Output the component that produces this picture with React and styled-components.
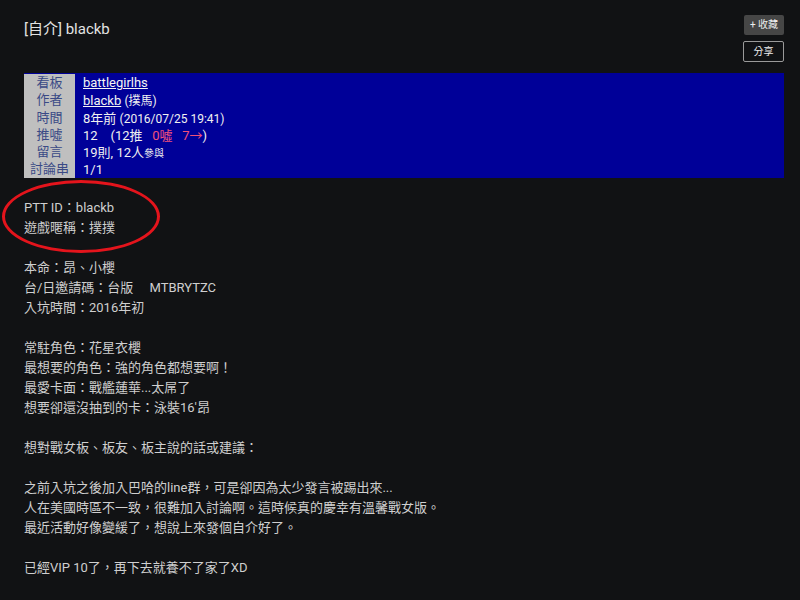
import React from 'react'
import styled, { createGlobalStyle } from 'styled-components'

const GlobalStyle = createGlobalStyle`
  html, body {
    margin: 0;
    padding: 0;
    background: #111214;
  }
  body {
    font-family: Roboto, "Noto Sans CJK TC", sans-serif;
    color: #d4d4d4;
  }
`

const Page = styled.div`
  padding: 13px 16px 0 24px;
`
const Header = styled.div`
  display: flex;
  justify-content: space-between;
  align-items: flex-start;
`
const Title = styled.div`
  font-size: 15px;
  color: #e2e2e2;
  margin-top: 4px;
`
const Actions = styled.div`
  display: flex;
  flex-direction: column;
  align-items: flex-end;
  gap: 6px;
  margin-top: 2px;
`
const FavButton = styled.div`
  width: 40px;
  height: 20px;
  line-height: 20px;
  text-align: center;
  font-size: 10px;
  color: #eee;
  background: #464646;
  border-radius: 2px;
`
const ShareButton = styled.div`
  width: 39px;
  height: 19px;
  line-height: 19px;
  text-align: center;
  font-size: 10px;
  color: #eee;
  border: 1px solid #9a9a9a;
  border-radius: 2px;
`
const MetaTable = styled.div`
  margin-top: 11px;
  display: flex;
  flex-direction: column;
  background: #000098;
  padding: 1px 0 0;
`
const MetaRow = styled.div`
  display: flex;
  height: 17.3px;
  align-items: center;
`
const MetaLabel = styled.div`
  width: 51px;
  flex-shrink: 0;
  align-self: stretch;
  background: #bfbfbf;
  color: #3a4a86;
  font-size: 13px;
  text-align: center;
  line-height: 17.3px;
`
const MetaValue = styled.div`
  padding-left: 8px;
  font-size: 13px;
  color: #f0f0f0;
  white-space: nowrap;
`
const Link = styled.span`
  text-decoration: underline;
  color: #f4f4f4;
`
const Small = styled.span`
  font-size: 12px;
`
const Tiny = styled.span`
  font-size: 10px;
`
const Boo = styled.span`
  color: #f0507a;
`
const Content = styled.div`
  position: relative;
  margin-top: 20px;
  font-size: 13px;
  line-height: 20px;
  color: #cfcfcf;
`
const Para = styled.div`
  margin-bottom: 20px;
`
const Line = styled.div`
  white-space: nowrap;
`
const Circle = styled.div`
  position: absolute;
  left: -22px;
  top: -18px;
  width: 152px;
  height: 67px;
  border: 3px solid #e4141c;
  border-radius: 50%;
  pointer-events: none;
`

const meta = [
  { label: '看板', value: <Link>battlegirlhs</Link> },
  { label: '作者', value: <><Link>blackb</Link> <Small>(撲馬)</Small></> },
  { label: '時間', value: <>8年前 <Small>(2016/07/25 19:41)</Small></> },
  {
    label: '推噓',
    value: (
      <>
        12&nbsp;&nbsp;&nbsp;&nbsp;(12推&nbsp;&nbsp;&nbsp;<Boo>0噓&nbsp;&nbsp;&nbsp;7→</Boo>)
      </>
    ),
  },
  { label: '留言', value: <>19則, 12人<Tiny>參與</Tiny></> },
  { label: '討論串', value: '1/1' },
]

const paragraphs = [
  ['PTT ID：blackb', '遊戲暱稱：撲撲'],
  ['本命：昂、小櫻', '台/日邀請碼：台版　 MTBRYTZC', '入坑時間：2016年初'],
  ['常駐角色：花星衣櫻', '最想要的角色：強的角色都想要啊！', '最愛卡面：戰艦蓮華...太屌了', '想要卻還沒抽到的卡：泳裝16\'昂'],
  ['想對戰女板、板友、板主說的話或建議：'],
  [
    '之前入坑之後加入巴哈的line群，可是卻因為太少發言被踢出來...',
    '人在美國時區不一致，很難加入討論啊。這時候真的慶幸有溫馨戰女版。',
    '最近活動好像變緩了，想說上來發個自介好了。',
  ],
  ['已經VIP 10了，再下去就養不了家了XD'],
]

const App = () => {
  return (
    <>
      <GlobalStyle />
      <Page lang="zh-Hant-TW">
        <Header>
          <Title>[自介] blackb</Title>
          <Actions>
            <FavButton>+ 收藏</FavButton>
            <ShareButton>分享</ShareButton>
          </Actions>
        </Header>
        <MetaTable>
          {meta.map((m) => (
            <MetaRow key={m.label}>
              <MetaLabel>{m.label}</MetaLabel>
              <MetaValue>{m.value}</MetaValue>
            </MetaRow>
          ))}
        </MetaTable>
        <Content>
          <Circle />
          {paragraphs.map((lines, i) => (
            <Para key={i}>
              {lines.map((l) => (
                <Line key={l}>{l}</Line>
              ))}
            </Para>
          ))}
        </Content>
      </Page>
    </>
  )
}

export default App
